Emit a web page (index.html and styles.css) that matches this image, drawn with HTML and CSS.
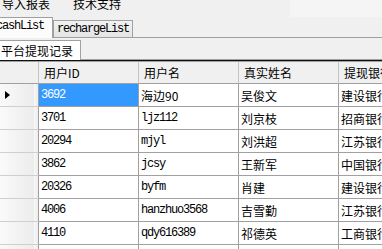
FILE: index.html
```html
<!DOCTYPE html>
<html lang="zh-CN">
<head>
  <meta charset="UTF-8">
  <title>提现记录</title>
  <link rel="stylesheet" href="styles.css">
</head>
<body>

  <!-- Menu -->
  <div class="menubar">
    <span class="menu-item">导入报表</span>
    <span class="menu-item">技术支持</span>
  </div>

  <!-- Outer tabs -->
  <div class="tabstrip">
    <div class="tab active">cashList</div>
    <div class="tab">rechargeList</div>
  </div>

  <!-- Inner tabs -->
  <div class="subtabs">
    <div class="subtab">平台提现记录</div>
  </div>

  <!-- Data grid -->
  <div class="grid">
    <div class="row head">
      <div class="cell rh"></div>
      <div class="cell">用户ID</div>
      <div class="cell">用户名</div>
      <div class="cell">真实姓名</div>
      <div class="cell">提现银行</div>
    </div>
    <div class="row">
      <div class="cell rh"><span class="arrow"></span></div>
      <div class="cell mono selected">3692</div>
      <div class="cell">海边90</div>
      <div class="cell">吴俊文</div>
      <div class="cell">建设银行</div>
    </div>
    <div class="row">
      <div class="cell rh"></div>
      <div class="cell mono">3701</div>
      <div class="cell mono">ljz112</div>
      <div class="cell">刘京枝</div>
      <div class="cell">招商银行</div>
    </div>
    <div class="row">
      <div class="cell rh"></div>
      <div class="cell mono">20294</div>
      <div class="cell mono">mjyl</div>
      <div class="cell">刘洪超</div>
      <div class="cell">江苏银行</div>
    </div>
    <div class="row">
      <div class="cell rh"></div>
      <div class="cell mono">3862</div>
      <div class="cell mono">jcsy</div>
      <div class="cell">王新军</div>
      <div class="cell">中国银行</div>
    </div>
    <div class="row">
      <div class="cell rh"></div>
      <div class="cell mono">20326</div>
      <div class="cell mono">byfm</div>
      <div class="cell">肖建</div>
      <div class="cell">建设银行</div>
    </div>
    <div class="row">
      <div class="cell rh"></div>
      <div class="cell mono">4006</div>
      <div class="cell mono">hanzhuo3568</div>
      <div class="cell">吉雪勤</div>
      <div class="cell">江苏银行</div>
    </div>
    <div class="row">
      <div class="cell rh"></div>
      <div class="cell mono">4110</div>
      <div class="cell mono">qdy616389</div>
      <div class="cell">祁德英</div>
      <div class="cell">工商银行</div>
    </div>
    <div class="row">
      <div class="cell rh"></div>
      <div class="cell"></div>
      <div class="cell"></div>
      <div class="cell"></div>
      <div class="cell"></div>
    </div>
  </div>

</body>
</html>
```

FILE: styles.css
```css
body {
  margin: 0;
  width: 382px;
  height: 249px;
  overflow: hidden;
  background-color: #f0f0f0;
  font-family: "Noto Sans CJK SC", sans-serif;
  font-size: 12px;
  color: #000;
}

/* Menu */
.menubar {
  height: 17px;
  padding-left: 2px;
  display: flex;
  overflow: hidden;
  background: linear-gradient(to right, #f0f0f0 76%, #f5f5f5 76%);
}

.menu-item {
  line-height: 12px;
  margin-top: -2px;
  margin-right: 23px;
}

/* Outer tabs */
.tabstrip {
  height: 20px;
  margin-left: -10px;
  display: flex;
  align-items: flex-end;
  border-bottom: 1px solid #a0a0a0;
}

.tab {
  height: 17px;
  padding: 0 3px;
  border: 1px solid #a0a0a0;
  border-bottom: none;
  background: linear-gradient(#f2f2f2, #e4e4e4);
  font-family: "Liberation Mono", monospace;
  letter-spacing: -1.2px;
  line-height: 17px;
  box-sizing: border-box;
}

.tab.active {
  height: 21px;
  margin-bottom: -1px;
  padding: 0 8px 0 6px;
  border-left: none;
  background: #fcfcfc;
  line-height: 17px;
}

/* Inner tabs */
.subtabs {
  height: 21px;
  display: flex;
  align-items: flex-end;
  border-bottom: 1px solid #a0a0a0;
}

.subtab {
  height: 20px;
  width: 81px;
  margin-bottom: -1px;
  padding-left: 1px;
  border-top: 1px solid #a0a0a0;
  border-right: 1px solid #a0a0a0;
  background: #fff;
  line-height: 19px;
  box-sizing: border-box;
}

/* Grid */
.grid {
  border-top: 1px solid #101010;
  background: #fff;
}

.row {
  display: flex;
  height: 23px;
}

.row.head {
  border-top: 1px solid #a0a0a0;
  height: 22px;
  background: #f0f0f0;
}

.cell {
  width: 100px;
  flex: none;
  display: flex;
  align-items: center;
  padding-left: 2px;
  border-right: 1px solid #a0a0a0;
  border-bottom: 1px solid #a0a0a0;
  box-sizing: border-box;
  white-space: nowrap;
  overflow: hidden;
}

.head .cell {
  padding-left: 5px;
  border-right-color: #c4c4c4;
}

.cell.rh {
  width: 39px;
  padding-left: 5px;
  background: linear-gradient(to right, #fafafa, #ececec 88%, #f8f8f8 90%, #ececec);
  border-bottom-color: #cfcfcf;
}

.head .cell.rh {
  background: #f0f0f0;
  border-bottom-color: #a0a0a0;
}

.mono {
  font-family: "Liberation Mono", "Noto Sans CJK SC", monospace;
  letter-spacing: -1.2px;
}

.selected {
  background-color: #3399ff;
  color: #fff;
}

.arrow {
  width: 0;
  height: 0;
  border-top: 4px solid transparent;
  border-bottom: 4px solid transparent;
  border-left: 5px solid #000;
}
```
